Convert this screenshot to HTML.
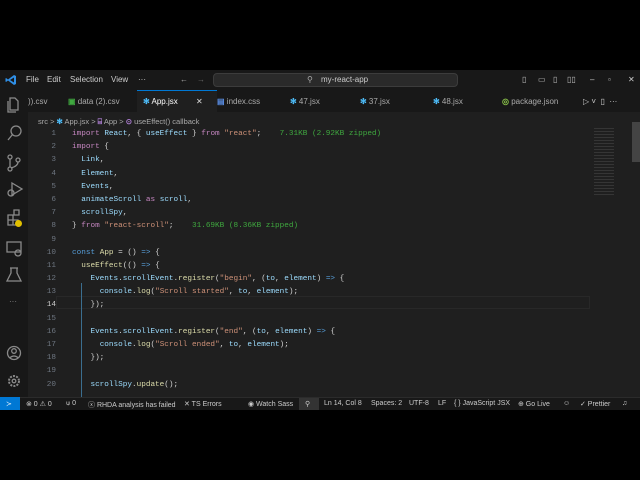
<!DOCTYPE html>
<html><head><meta charset="utf-8"><style>
*{margin:0;padding:0;box-sizing:border-box}
body{width:640px;height:480px;background:#000;position:relative;overflow:hidden;font-family:"Liberation Sans",sans-serif;color:#ccc;font-size:8px}
.win{position:absolute;left:0;top:70px;width:640px;height:340px;background:#1f1f1f}
.title{position:absolute;left:0;top:0;width:640px;height:20px;background:#181818}
.title span{position:absolute;top:5px;font-size:8px;color:#ccc}
.search{position:absolute;left:213px;top:3px;width:245px;height:14px;background:#2a2a2a;border:1px solid #3c3c3c;border-radius:4px}
.tabs{position:absolute;left:28px;top:20px;width:612px;height:22px;background:#181818}
.tab{position:absolute;top:7px;font-size:8px;color:#aaa}
.act{position:absolute;left:0;top:20px;width:28px;height:307px;background:#181818}
.code{position:absolute;left:0;top:46px;font-family:"Liberation Mono",monospace;font-size:7.7px}
.ln{position:absolute;left:30px;width:26px;text-align:right;color:#6e7681}
.cl{position:absolute;left:72px;white-space:pre;color:#d4d4d4}
.k{color:#c586c0}.v{color:#9cdcfe}.s{color:#ce9178}.b{color:#569cd6}.f{color:#dcdcaa}.g{color:#3fa83f}.w{color:#d4d4d4}
.status{position:absolute;left:0;top:327px;width:640px;height:13px;background:#181818;border-top:1px solid #2b2b2b}
.status span{position:absolute;top:2px;font-size:7px;color:#ccc}
</style></head><body>
<div class="win">
 <div class="title">
  <svg style="position:absolute;left:5px;top:4px" width="12" height="12" viewBox="0 0 12 12"><path d="M9 1 L11 2 V10 L9 11 L3 6.5 L1 8 L0.5 7.5 V4.5 L1 4 L3 5.5 Z M9 3.5 L5 6 L9 8.5Z" fill="#2f8fe6"/></svg>
  <span style="left:26px">File</span><span style="left:47px">Edit</span><span style="left:70px">Selection</span><span style="left:111px">View</span><span style="left:138px">···</span>
  <span style="left:180px;color:#aaa">←</span><span style="left:197px;color:#666">→</span>
  <div class="search"></div>
  <span style="left:307px;color:#aaa">⚲</span><span style="left:321px">my-react-app</span>
  <span style="left:522px;color:#bbb">▯</span><span style="left:538px;color:#bbb">▭</span><span style="left:553px;color:#bbb">▯</span><span style="left:567px;color:#bbb">▯▯</span>
  <span style="left:590px">–</span><span style="left:608px">▫</span><span style="left:628px">✕</span>
 </div>
 <div class="tabs">
  <div style="position:absolute;left:109px;top:0;width:80px;height:22px;background:#1f1f1f;border-top:1px solid #0078d4"></div>
  <span class="tab" style="left:0px">)).csv</span>
  <span class="tab" style="left:40px"><b style="color:#3fa83f">▣</b> data (2).csv</span>
  <span class="tab" style="left:115px;color:#fff"><b style="color:#4fc1ff">✻</b> App.jsx</span>
  <span class="tab" style="left:168px;color:#ddd">✕</span>
  <span class="tab" style="left:189px"><b style="color:#5b8fe6">▤</b> index.css</span>
  <span class="tab" style="left:262px"><b style="color:#4fc1ff">✻</b> 47.jsx</span>
  <span class="tab" style="left:332px"><b style="color:#4fc1ff">✻</b> 37.jsx</span>
  <span class="tab" style="left:405px"><b style="color:#4fc1ff">✻</b> 48.jsx</span>
  <span class="tab" style="left:474px"><b style="color:#8bc34a">◎</b> package.json</span>
  <span class="tab" style="left:555px;color:#ccc">▷ ˅ &nbsp;▯ &nbsp;···</span>
 </div>
 <div class="act">
  <svg width="28" height="307" viewBox="0 0 28 307" fill="none" stroke="#8a8a8a" stroke-width="1.3">
   <path d="M10 8 h5 l3 3 v9 h-8 z M8 11 v11 h8"/>
   <circle cx="16" cy="41" r="5"/><path d="M12.5 44.5 L8 50"/>
   <circle cx="10" cy="67" r="2"/><circle cx="10" cy="79" r="2"/><circle cx="18" cy="70" r="2"/><path d="M10 69 v8 M18 72 q0 4 -7 6"/>
   <path d="M12 93 l10 6 l-10 6 z"/><circle cx="11" cy="103" r="3"/>
   <path d="M8 125 h5 v5 h-5 z M8 130 h5 v5 h-5 z M13 130 h5 v5 h-5 z M14 120 h5 v5 h-5 z"/>
   <path d="M7 152 h14 v10 h-14 z"/><circle cx="18" cy="163" r="3"/>
   <path d="M11 178 v5 l-4 8 h14 l-4 -8 v-5 M10 178 h8"/>
   <circle cx="14" cy="263" r="6.5"/><circle cx="14" cy="261" r="2.3"/><path d="M9.5 268 q4.5 -4 9 0"/>
   <circle cx="14" cy="291" r="5" stroke-dasharray="2 1.2" stroke-width="2"/><circle cx="14" cy="291" r="1.8"/>
  </svg>
  <div style="position:absolute;left:15px;top:130px;width:7px;height:7px;background:#e2c000;border-radius:50%"></div>
  <span style="position:absolute;left:9px;top:207px;color:#888">···</span>
 </div>
 <div style="position:absolute;left:38px;top:47px;font-size:7.5px;color:#aaa">src &gt; <b style="color:#4fc1ff">✻</b> App.jsx &gt; <b style="color:#b180d7">⌸</b> App &gt; <b style="color:#b180d7">⊙</b> useEffect() callback</div>
 <div style="position:absolute;left:594px;top:56px;width:20px;height:70px;background:repeating-linear-gradient(#1f1f1f 0 2px,#444 2px 3px);opacity:.6"></div>
 <div style="position:absolute;left:632px;top:52px;width:8px;height:40px;background:#444"></div>
 <div style="position:absolute;left:56px;top:226px;width:534px;height:13px;border:1px solid #282828"></div>
 <div style="position:absolute;left:81px;top:213px;width:1px;height:114px;background:#3b6e8f"></div>
 <div class="code">
 <div class="ln" style="top:14px">1</div><div class="cl" style="top:14px"><span class="k">import</span> <span class="v">React</span>, { <span class="v">useEffect</span> } <span class="k">from</span> <span class="s">"react"</span>;    <span class="g">7.31KB (2.92KB zipped)</span></div>
 <div class="ln" style="top:27px">2</div><div class="cl" style="top:27px"><span class="k">import</span> {</div>
 <div class="ln" style="top:40px">3</div><div class="cl" style="top:40px">  <span class="v">Link</span>,</div>
 <div class="ln" style="top:54px">4</div><div class="cl" style="top:54px">  <span class="v">Element</span>,</div>
 <div class="ln" style="top:67px">5</div><div class="cl" style="top:67px">  <span class="v">Events</span>,</div>
 <div class="ln" style="top:80px">6</div><div class="cl" style="top:80px">  <span class="v">animateScroll</span> <span class="k">as</span> <span class="v">scroll</span>,</div>
 <div class="ln" style="top:93px">7</div><div class="cl" style="top:93px">  <span class="v">scrollSpy</span>,</div>
 <div class="ln" style="top:106px">8</div><div class="cl" style="top:106px">} <span class="k">from</span> <span class="s">"react-scroll"</span>;    <span class="g">31.69KB (8.36KB zipped)</span></div>
 <div class="ln" style="top:120px">9</div>
 <div class="ln" style="top:133px">10</div><div class="cl" style="top:133px"><span class="b">const</span> <span class="f">App</span> = () <span class="b">=&gt;</span> {</div>
 <div class="ln" style="top:146px">11</div><div class="cl" style="top:146px">  <span class="f">useEffect</span>(() <span class="b">=&gt;</span> {</div>
 <div class="ln" style="top:159px">12</div><div class="cl" style="top:159px">    <span class="v">Events</span>.<span class="v">scrollEvent</span>.<span class="f">register</span>(<span class="s">"begin"</span>, (<span class="v">to</span>, <span class="v">element</span>) <span class="b">=&gt;</span> {</div>
 <div class="ln" style="top:172px">13</div><div class="cl" style="top:172px">      <span class="v">console</span>.<span class="f">log</span>(<span class="s">"Scroll started"</span>, <span class="v">to</span>, <span class="v">element</span>);</div>
 <div class="ln" style="top:185px;color:#ccc">14</div><div class="cl" style="top:185px">    });</div>
 <div class="ln" style="top:199px">15</div>
 <div class="ln" style="top:212px">16</div><div class="cl" style="top:212px">    <span class="v">Events</span>.<span class="v">scrollEvent</span>.<span class="f">register</span>(<span class="s">"end"</span>, (<span class="v">to</span>, <span class="v">element</span>) <span class="b">=&gt;</span> {</div>
 <div class="ln" style="top:225px">17</div><div class="cl" style="top:225px">      <span class="v">console</span>.<span class="f">log</span>(<span class="s">"Scroll ended"</span>, <span class="v">to</span>, <span class="v">element</span>);</div>
 <div class="ln" style="top:238px">18</div><div class="cl" style="top:238px">    });</div>
 <div class="ln" style="top:251px">19</div>
 <div class="ln" style="top:265px">20</div><div class="cl" style="top:265px">    <span class="v">scrollSpy</span>.<span class="f">update</span>();</div>
 </div>
 <div class="status">
  <div style="position:absolute;left:0;top:-1px;width:20px;height:13px;background:#0078d4"></div>
  <span style="left:6px;color:#fff">≻</span>
  <span style="left:26px">⊗ 0 ⚠ 0</span><span style="left:66px">⍦ 0</span><span style="left:88px">ⓧ RHDA analysis has failed</span><span style="left:184px">✕ TS Errors</span>
  <span style="left:248px">◉ Watch Sass</span>
  <div style="position:absolute;left:299px;top:0;width:20px;height:12px;background:#333"></div><span style="left:305px">⚲</span>
  <span style="left:324px">Ln 14, Col 8</span><span style="left:371px">Spaces: 2</span><span style="left:409px">UTF-8</span><span style="left:438px">LF</span><span style="left:454px">{ } JavaScript JSX</span><span style="left:518px">⊕ Go Live</span><span style="left:563px">☺</span><span style="left:580px">✓ Prettier</span><span style="left:622px">♫</span>
 </div>
</div>
</body></html>
